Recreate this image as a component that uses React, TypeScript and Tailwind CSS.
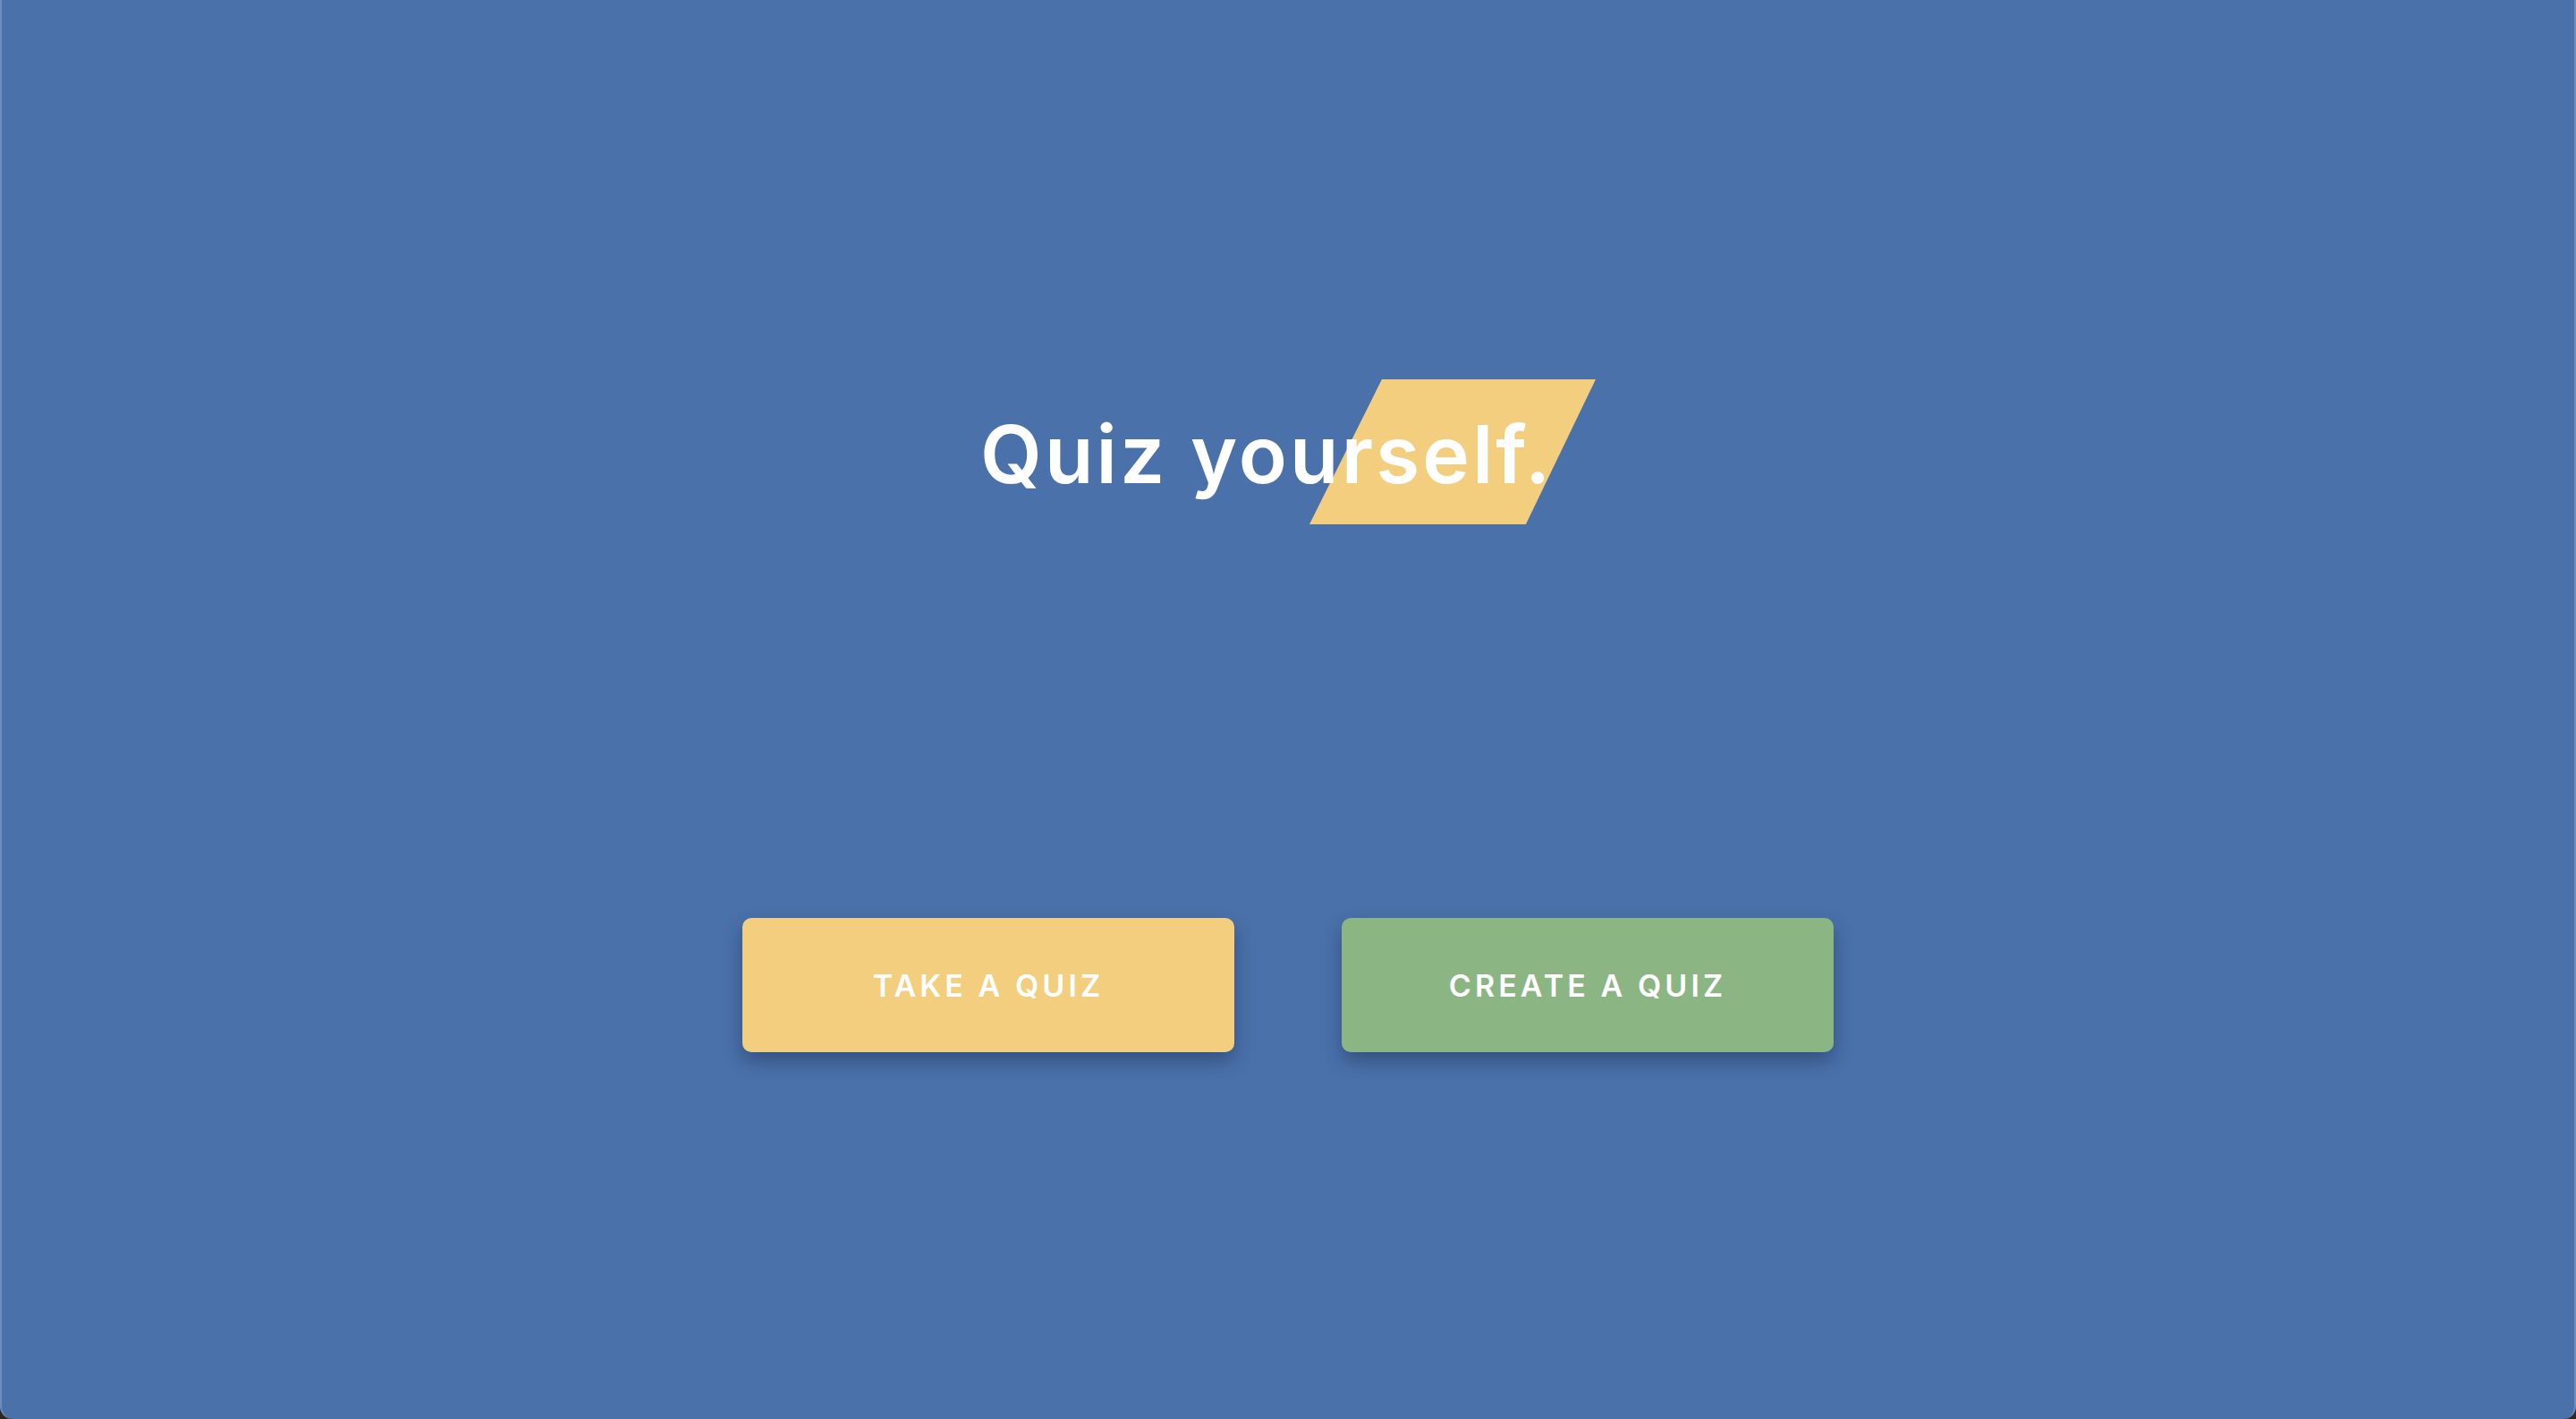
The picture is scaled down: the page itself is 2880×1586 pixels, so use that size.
import React from "react";

export default function App() {
  return (
    <div className="w-full h-[1586px] bg-[#2e2620] [font-family:Inter,'Noto_Sans',sans-serif]">
      <div className="h-full flex flex-col rounded-b-[14px] bg-[#4a71a9] border-x-2 border-[#6d8dbd]">
        <div className="pt-[424px] flex justify-center">
          <div className="relative h-[162px] w-[688px]">
            <div className="absolute right-0 top-0 h-[162px] w-[320px] bg-[#f2ce7e] [clip-path:polygon(25.3%_0,100%_0,75.6%_100%,0_100%)]" />
            <h1 className="relative pt-[40px] text-[89px] leading-[88px] font-semibold text-white tracking-[0.035em] whitespace-nowrap">
              Quiz yourself.
            </h1>
          </div>
        </div>
        <div className="mt-[440px] flex justify-center gap-[120px]">
          <button className="w-[550px] h-[150px] rounded-[10px] bg-[#f2ce7e] text-white text-[34px] font-semibold tracking-[0.12em] shadow-[0_10px_20px_rgba(20,35,70,0.4)]">
            TAKE A QUIZ
          </button>
          <button className="w-[550px] h-[150px] rounded-[10px] bg-[#8bb583] text-white text-[34px] font-semibold tracking-[0.12em] shadow-[0_10px_20px_rgba(20,35,70,0.4)]">
            CREATE A QUIZ
          </button>
        </div>
      </div>
    </div>
  );
}
